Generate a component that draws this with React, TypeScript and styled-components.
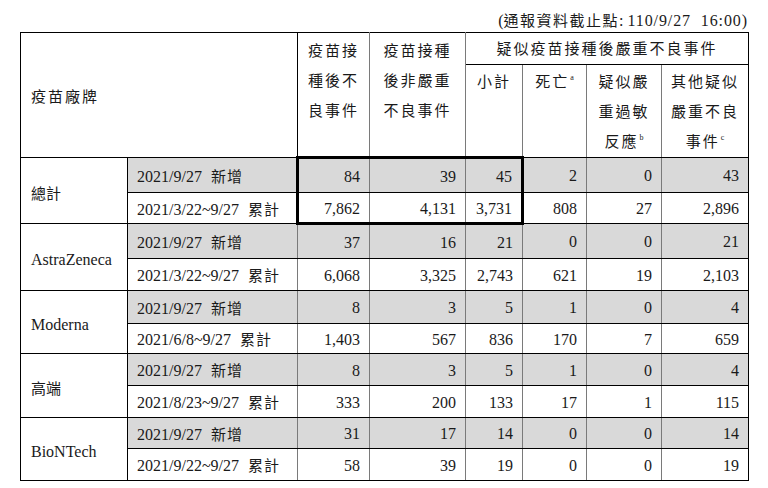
import React from 'react';
import styled, { createGlobalStyle, css } from 'styled-components';

const GlobalStyle = createGlobalStyle`
  html, body {
    margin: 0;
    padding: 0;
    background: #fff;
  }
  body {
    font-family: "Liberation Serif", "Noto Sans CJK TC", serif;
    color: #1a1a1a;
  }
`;

type Cell = number | string;
type Row = { from: string; label: string; values: Cell[]; added: boolean; height: number };
type Group = { brand: string; cjkBrand: boolean; rows: Row[] };

const groups: Group[] = [
  {
    brand: '總計',
    cjkBrand: true,
    rows: [
      { from: '2021/9/27', label: '新增', values: [84, 39, 45, 2, 0, 43], added: true, height: 35 },
      { from: '2021/3/22~9/27', label: '累計', values: ['7,862', '4,131', '3,731', 808, 27, '2,896'], added: false, height: 31 },
    ],
  },
  {
    brand: 'AstraZeneca',
    cjkBrand: false,
    rows: [
      { from: '2021/9/27', label: '新增', values: [37, 16, 21, 0, 0, 21], added: true, height: 35 },
      { from: '2021/3/22~9/27', label: '累計', values: ['6,068', '3,325', '2,743', 621, 19, '2,103'], added: false, height: 32 },
    ],
  },
  {
    brand: 'Moderna',
    cjkBrand: false,
    rows: [
      { from: '2021/9/27', label: '新增', values: [8, 3, 5, 1, 0, 4], added: true, height: 33 },
      { from: '2021/6/8~9/27', label: '累計', values: ['1,403', 567, 836, 170, 7, 659], added: false, height: 30 },
    ],
  },
  {
    brand: '高端',
    cjkBrand: true,
    rows: [
      { from: '2021/9/27', label: '新增', values: [8, 3, 5, 1, 0, 4], added: true, height: 32 },
      { from: '2021/8/23~9/27', label: '累計', values: [333, 200, 133, 17, 1, 115], added: false, height: 32 },
    ],
  },
  {
    brand: 'BioNTech',
    cjkBrand: false,
    rows: [
      { from: '2021/9/27', label: '新增', values: [31, 17, 14, 0, 0, 14], added: true, height: 31 },
      { from: '2021/9/22~9/27', label: '累計', values: [58, 39, 19, 0, 0, 19], added: false, height: 32 },
    ],
  },
];

const colWidths = [107, 170, 72, 96, 57, 64, 75, 87];

const Page = styled.div`
  width: 768px;
  padding: 0 20px;
  box-sizing: border-box;
`;

const Caption = styled.div`
  text-align: right;
  font-size: 16px;
  line-height: 20px;
  padding-top: 10px;
  height: 32px;
  box-sizing: border-box;
  white-space: pre;
`;

const Wide = styled.span`
  letter-spacing: 0.9px;
`;

const Table = styled.table`
  width: 728px;
  table-layout: fixed;
  border-collapse: collapse;
  font-size: 16px;
`;

const Cjk = styled.span<{ $size?: number; $gap?: number }>`
  font-family: "Noto Sans CJK TC", sans-serif;
  font-size: ${(p) => p.$size ?? 15}px;
  letter-spacing: ${(p) => p.$gap ?? 2}px;
`;

const PeriodLabel = styled(Cjk)`
  margin-left: 9px;
`;

const Sup = styled.sup`
  font-family: "Liberation Serif", serif;
  font-size: 8px;
  line-height: 0;
  vertical-align: 7px;
  margin-left: 1px;
`;

const gridLines = css<{ $last?: boolean }>`
  border-top: 1px solid #000;
  border-bottom: 1px solid #000;
  border-left: 1px solid #7a7a7a;
  border-right: 1px solid ${(p) => (p.$last ? '#000' : '#7a7a7a')};
`;

const HeadCell = styled.th<{ $last?: boolean; $top?: boolean; $pad?: number }>`
  ${gridLines};
  font-weight: normal;
  text-align: center;
  vertical-align: ${(p) => (p.$top ? 'top' : 'middle')};
  padding: ${(p) => p.$pad ?? 0}px 0 0 0;
  line-height: 30px;
`;

const HeadLine = styled.div`
  height: 30px;
  line-height: 30px;
`;

const BrandHead = styled.th`
  border: 1px solid #000;
  font-weight: normal;
  text-align: left;
  vertical-align: middle;
  line-height: 20px;
  padding: 2px 0 0 10px;
`;

const BrandCell = styled.td`
  border: 1px solid #000;
  padding: 6px 0 0 10px;
  vertical-align: middle;
  line-height: 20px;
  font-size: 16px;
`;

const PeriodCell = styled.td<{ $added: boolean }>`
  ${gridLines};
  border-left: 1px solid #000;
  background: ${(p) => (p.$added ? '#d9d9d9' : '#fff')};
  padding: 2px 0 0 9px;
  line-height: 20px;
  vertical-align: middle;
  white-space: nowrap;
`;

const NumCell = styled.td<{
  $added: boolean;
  $last?: boolean;
  $boxTop?: boolean;
  $boxBottom?: boolean;
  $boxLeft?: boolean;
  $boxRight?: boolean;
}>`
  ${gridLines};
  background: ${(p) => (p.$added ? '#d9d9d9' : '#fff')};
  text-align: right;
  padding: 2px 9px 0 0;
  line-height: 20px;
  vertical-align: middle;
  ${(p) => p.$boxTop && 'border-top: 3px solid #000;'}
  ${(p) => p.$boxBottom && 'border-bottom: 3px solid #000;'}
  ${(p) => p.$boxLeft && 'border-left: 3px solid #000;'}
  ${(p) => p.$boxRight && 'border-right: 3px solid #000;'}
`;

const BodyRow = styled.tr<{ $h: number }>`
  height: ${(p) => p.$h}px;
`;

const Lines = ({ lines, sup }: { lines: string[]; sup?: string }) => (
  <>
    {lines.map((l, i) => (
      <HeadLine key={i}>
        <Cjk>{l}</Cjk>
        {sup && i === lines.length - 1 && <Sup>{sup}</Sup>}
      </HeadLine>
    ))}
  </>
);

export default function App() {
  return (
    <Page>
      <GlobalStyle />
      <Caption>
        (<Cjk $size={15} $gap={1.5}>通報資料截止點</Cjk>: <Wide>110/9/27  16:00)</Wide>
      </Caption>
      <Table>
        <colgroup>
          {colWidths.map((w, i) => (
            <col key={i} style={{ width: w }} />
          ))}
        </colgroup>
        <thead>
          <tr style={{ height: 32 }}>
            <BrandHead colSpan={2} rowSpan={2}>
              <Cjk>疫苗廠牌</Cjk>
            </BrandHead>
            <HeadCell rowSpan={2} $top $pad={2}>
              <Lines lines={['疫苗接', '種後不', '良事件']} />
            </HeadCell>
            <HeadCell rowSpan={2} $top $pad={2}>
              <Lines lines={['疫苗接種', '後非嚴重', '不良事件']} />
            </HeadCell>
            <HeadCell colSpan={4} $last>
              <Cjk>疑似疫苗接種後嚴重不良事件</Cjk>
            </HeadCell>
          </tr>
          <tr style={{ height: 93 }}>
            <HeadCell $top $pad={1}>
              <Lines lines={['小計']} />
            </HeadCell>
            <HeadCell $top $pad={1}>
              <Lines lines={['死亡']} sup="a" />
            </HeadCell>
            <HeadCell $top $pad={1}>
              <Lines lines={['疑似嚴', '重過敏', '反應']} sup="b" />
            </HeadCell>
            <HeadCell $top $pad={1} $last>
              <Lines lines={['其他疑似', '嚴重不良', '事件']} sup="c" />
            </HeadCell>
          </tr>
        </thead>
        <tbody>
          {groups.map((g, gi) =>
            g.rows.map((r, ri) => (
              <BodyRow key={`${gi}-${ri}`} $h={r.height}>
                {ri === 0 && (
                  <BrandCell rowSpan={2}>
                    {g.cjkBrand ? <Cjk $gap={0}>{g.brand}</Cjk> : g.brand}
                  </BrandCell>
                )}
                <PeriodCell $added={r.added}>
                  {r.from}
                  <PeriodLabel $gap={1}>{r.label}</PeriodLabel>
                </PeriodCell>
                {r.values.map((v, vi) => {
                  const boxed = gi === 0 && vi < 3;
                  return (
                    <NumCell
                      key={vi}
                      $added={r.added}
                      $last={vi === r.values.length - 1}
                      $boxTop={boxed && ri === 0}
                      $boxBottom={boxed && ri === 1}
                      $boxLeft={boxed && vi === 0}
                      $boxRight={boxed && vi === 2}
                    >
                      {v}
                    </NumCell>
                  );
                })}
              </BodyRow>
            ))
          )}
        </tbody>
      </Table>
    </Page>
  );
}
